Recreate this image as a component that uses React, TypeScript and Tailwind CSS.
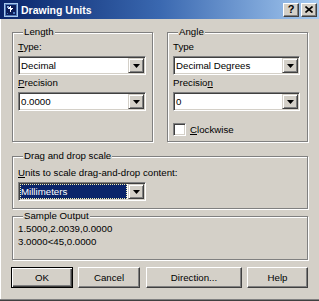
import type { ReactNode } from "react";

const FACE = "bg-[#d4d0c8]";

function Group({ label, className, children }: { label: string; className?: string; children?: ReactNode }) {
    return (
        <div
            className={`border border-[#808080] shadow-[inset_1px_1px_0_#ffffff,1px_1px_0_#ffffff] ${className ?? ""}`}
        >
            <div className={`-mt-[7px] ml-[5px] px-[1px] w-fit h-[12px] leading-[12px] ${FACE}`}>{label}</div>
            {children}
        </div>
    );
}

function DropArrow() {
    return (
        <div
            className={`w-[16px] h-full flex items-center justify-center ${FACE} border border-t-[#d4d0c8] border-l-[#d4d0c8] border-r-[#404040] border-b-[#404040] shadow-[inset_1px_1px_0_#ffffff,inset_-1px_-1px_0_#808080]`}
        >
            <svg width="7" height="4" viewBox="0 0 7 4">
                <polygon points="0,0 7,0 3.5,4" fill="#000" />
            </svg>
        </div>
    );
}

function Combo({ value, selected }: { value: string; selected?: boolean }) {
    return (
        <div className="h-[19px] w-full flex p-[1px] bg-white border border-t-[#808080] border-l-[#808080] border-r-white border-b-white shadow-[inset_1px_1px_0_#404040,inset_-1px_-1px_0_#d4d0c8]">
            {selected ? (
                <div className="flex-1 mr-[1px] bg-[#0a246a] text-white border border-dotted border-[#f4f0b0] flex items-center leading-[12px]">
                    <span className="pl-[0px]">{value}</span>
                </div>
            ) : (
                <div className="flex-1 flex items-center pl-[1px] leading-[12px]">{value}</div>
            )}
            <DropArrow />
        </div>
    );
}

function Button({ children, w, isDefault }: { children: ReactNode; w: string; isDefault?: boolean }) {
    const edge = isDefault
        ? "border border-black shadow-[inset_1px_1px_0_#ffffff,inset_-1px_-1px_0_#404040,inset_-2px_-2px_0_#808080]"
        : "border border-t-white border-l-white border-r-[#404040] border-b-[#404040] shadow-[inset_-1px_-1px_0_#808080]";
    return (
        <div className={`${w} h-[21px] ${FACE} ${edge} flex items-center justify-center leading-[12px]`}>
            {children}
        </div>
    );
}

function TitleButton({ children }: { children: ReactNode }) {
    return (
        <div
            className={`w-[16px] h-[14px] ${FACE} border border-t-white border-l-white border-r-[#404040] border-b-[#404040] shadow-[inset_-1px_-1px_0_#808080] flex items-center justify-center`}
        >
            {children}
        </div>
    );
}

function AppIcon() {
    return (
        <svg width="14" height="14" viewBox="0 0 14 14" shapeRendering="crispEdges">
            <rect x="0" y="0" width="14" height="14" fill="#a8c8ec" />
            <rect x="1" y="1" width="12" height="12" fill="#5078b8" />
            <rect x="2" y="2" width="10" height="10" fill="#0c1c58" />
            <rect x="3" y="3" width="2" height="2" fill="#8cb0e0" />
            <rect x="6" y="3" width="1" height="6" fill="#ffffff" />
            <rect x="4" y="5" width="5" height="1" fill="#ffffff" />
            <rect x="5" y="4" width="1" height="1" fill="#ffffff" />
            <rect x="7" y="6" width="1" height="1" fill="#ffffff" />
            <rect x="9" y="9" width="2" height="2" fill="#4878c0" />
            <rect x="3" y="10" width="1" height="1" fill="#4878c0" />
        </svg>
    );
}

export default function App() {
    return (
        <div className="w-[319px] h-[301px] overflow-hidden bg-[#d4d0c8] text-black text-[9.7px] font-['Liberation_Sans',Arial,sans-serif] flex flex-col">
            {/* caption */}
            <div className="h-[19px] shrink-0 flex items-center pl-[4px] pr-[2px] bg-gradient-to-r from-[#0a246a] via-[#3a68b0] to-[#a6caf0]">
                <AppIcon />
                <span className="ml-[3px] text-white font-bold text-[10.5px] leading-[12px]">Drawing Units</span>
                <div className="ml-auto flex gap-[2px]">
                    <TitleButton>
                        <span className="font-bold text-[11px] leading-[11px] -mt-[1px]">?</span>
                    </TitleButton>
                    <TitleButton>
                        <svg width="8" height="7" viewBox="0 0 8 7">
                            <path d="M0.5 0.5 L7.5 6.5 M7.5 0.5 L0.5 6.5" stroke="#000" strokeWidth="1.6" />
                        </svg>
                    </TitleButton>
                </div>
            </div>

            {/* body */}
            <div className="flex-1 flex flex-col pl-[12px] pr-[11px] border-b border-b-[#808080] shadow-[inset_1px_0_0_#ffffff]">
                <div className="mt-[13px] flex gap-[14px]">
                    <Group label="Length" className="w-[141px] h-[110px] pl-[5px] pr-[6px]">
                        <div className="mt-[3px] leading-[12px]">
                            <u>T</u>ype:
                        </div>
                        <div className="mt-[3px]">
                            <Combo value="Decimal" />
                        </div>
                        <div className="mt-[2px] leading-[12px]">
                            <u>P</u>recision
                        </div>
                        <div className="mt-[3px]">
                            <Combo value="0.0000" />
                        </div>
                    </Group>
                    <Group label="Angle" className="w-[141px] h-[110px] pl-[5px] pr-[7px]">
                        <div className="mt-[3px] leading-[12px]">Type</div>
                        <div className="mt-[3px]">
                            <Combo value="Decimal Degrees" />
                        </div>
                        <div className="mt-[2px] leading-[12px]">
                            Precisio<u>n</u>
                        </div>
                        <div className="mt-[3px]">
                            <Combo value="0" />
                        </div>
                        <div className="mt-[12px] flex items-center gap-[4px]">
                            <div className="w-[13px] h-[13px] bg-white border border-t-[#808080] border-l-[#808080] border-r-white border-b-white shadow-[inset_1px_1px_0_#404040,inset_-1px_-1px_0_#d4d0c8]" />
                            <span className="leading-[12px]">
                                <u>C</u>lockwise
                            </span>
                        </div>
                    </Group>
                </div>

                <Group label="Drag and drop scale" className="mt-[14px] h-[53px] pl-[5px]">
                    <div className="mt-[5px] leading-[12px]">
                        <u>U</u>nits to scale drag-and-drop content:
                    </div>
                    <div className="mt-[3px] w-[128px]">
                        <Combo value="Millimeters" selected />
                    </div>
                </Group>

                <Group label="Sample Output" className="mt-[7px] h-[44px] pl-[5px]">
                    <div className="mt-[1px] leading-[12px]">1.5000,2.0039,0.0000</div>
                    <div className="mt-[1px] leading-[12px]">3.0000&lt;45,0.0000</div>
                </Group>

                <div className="mt-[7px] -ml-[1px] flex">
                    <Button w="w-[62px]" isDefault>
                        OK
                    </Button>
                    <div className="ml-[5px]">
                        <Button w="w-[62px]">Cancel</Button>
                    </div>
                    <div className="ml-[6px]">
                        <Button w="w-[96px]">Direction...</Button>
                    </div>
                    <div className="ml-[5px]">
                        <Button w="w-[61px]">Help</Button>
                    </div>
                </div>
            </div>
            <div className="h-[1px] shrink-0 bg-[#404040]" />
        </div>
    );
}
